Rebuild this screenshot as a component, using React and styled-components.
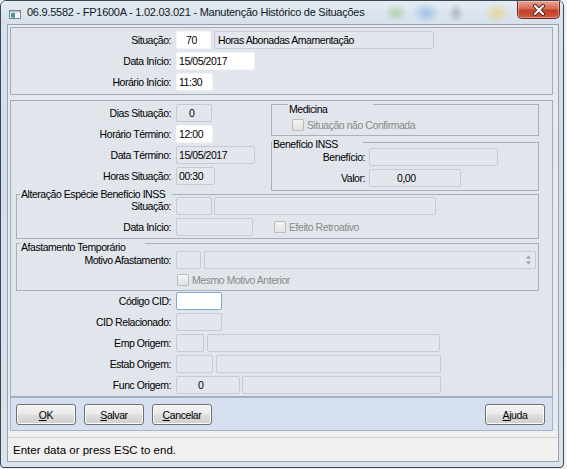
import React from "react";
import styled, { createGlobalStyle } from "styled-components";

const UI_FONT = `"Liberation Sans", Arial, sans-serif`;

const GlobalStyle = createGlobalStyle`
  *, *::before, *::after { box-sizing: border-box; }
  html, body { margin: 0; padding: 0; }
  body {
    background: #eef0f2;
    font-family: ${UI_FONT};
    font-size: 10.5px;
    letter-spacing: -0.45px;
    color: #000;
  }
`;

/* ---------- window chrome ---------- */

const Window = styled.div`
  width: 564px;
  height: 468px;
  border: 1px solid #3c4654;
  border-radius: 6px 6px 4px 4px;
  background: linear-gradient(180deg, #d9e3ee 0%, #d3dde9 30%, #dae2eb 100%);
  display: flex;
  flex-direction: column;
  overflow: hidden;
`;

const TitleBar = styled.div`
  height: 23px;
  flex: none;
  display: flex;
  align-items: flex-start;
  padding-left: 8px;
  background:
    radial-gradient(ellipse 12px 9px at 395px 12px, rgba(120, 190, 90, 0.45), transparent),
    radial-gradient(ellipse 14px 10px at 425px 12px, rgba(90, 150, 220, 0.45), transparent),
    radial-gradient(ellipse 8px 10px at 455px 12px, rgba(90, 100, 110, 0.35), transparent),
    radial-gradient(ellipse 13px 10px at 496px 12px, rgba(235, 200, 90, 0.55), transparent),
    linear-gradient(180deg, #e3eaf2 0%, #d6e0eb 100%);
`;

const AppIcon = styled.svg`
  flex: none;
  margin-top: 9px;
  width: 12px;
  height: 9px;
`;

const Title = styled.span`
  margin-left: 6px;
  line-height: 23px;
  font-size: 11px;
  letter-spacing: -0.25px;
  color: #101820;
  white-space: nowrap;
`;

const CloseButton = styled.div`
  margin-left: auto;
  margin-right: 3px;
  width: 43px;
  height: 18px;
  flex: none;
  border: 1px solid #6c2a22;
  border-top: none;
  border-radius: 0 0 5px 5px;
  background: linear-gradient(180deg, #e9a797 0%, #d46a54 45%, #c2402b 55%, #d3573f 100%);
  box-shadow: inset 0 0 0 1px rgba(255, 220, 210, 0.45);
  display: flex;
  align-items: center;
  justify-content: center;
`;

const Client = styled.div`
  flex: 1;
  margin: 0 4px 5px 6px;
  border: 1px solid #97a2b2;
  background: #f0f0f0;
  display: flex;
  flex-direction: column;
`;

const FormArea = styled.div`
  background: #e6e9ef;
  padding: 2px 5px 0 2px;
`;

/* ---------- panels, groups, rows ---------- */

const Panel = styled.div`
  height: ${(p) => p.$h}px;
  margin-top: ${(p) => p.$mt || 0}px;
  border: 1px solid #a3abb7;
  background: #e1e5ec;
  padding: ${(p) => p.$pad};
`;

const TopSection = styled.div`
  display: flex;
  height: 87px;
`;

const Column = styled.div`
  width: ${(p) => p.$w}px;
  flex: none;
  display: flex;
  flex-direction: column;
  gap: ${(p) => p.$gap || 0}px;
`;

const Group = styled.div`
  position: relative;
  width: ${(p) => p.$w}px;
  height: ${(p) => p.$h}px;
  margin-top: ${(p) => p.$mt || 0}px;
  margin-left: ${(p) => p.$ml || 0}px;
  border: 1px solid #a8b0bb;
  padding: ${(p) => p.$pad};
  display: flex;
  flex-direction: column;
  gap: ${(p) => p.$gap || 0}px;
`;

/* the caption sits over the top edge of its group box */
const Legend = styled.span`
  position: absolute;
  left: ${(p) => p.$x}px;
  top: ${(p) => p.$y}px;
  width: ${(p) => p.$w}px;
  height: 13px;
  line-height: 13px;
  padding-left: 1px;
  background: #e1e5ec;
  white-space: nowrap;
`;

const Rows = styled.div`
  display: flex;
  flex-direction: column;
  gap: 3px;
  margin-top: ${(p) => p.$mt || 0}px;
`;

const Row = styled.div`
  display: flex;
  align-items: center;
  height: ${(p) => p.$h || 18}px;
  flex: none;
`;

const Label = styled.span`
  width: ${(p) => p.$w}px;
  flex: none;
  text-align: right;
  padding-right: ${(p) => p.$gap ?? 5}px;
  white-space: nowrap;
`;

const Field = styled.div`
  width: ${(p) => p.$w}px;
  height: 18px;
  flex: none;
  margin-left: ${(p) => p.$ml || 0}px;
  border: 1px solid
    ${(p) => (p.$focus ? "#7ea9d9" : p.$edit ? "#f3f5f8" : "#c6cbd3")};
  border-radius: 2px;
  background: ${(p) => (p.$edit ? "#ffffff" : "#e3e6ec")};
  padding-left: ${(p) => p.$pad ?? 2}px;
  display: flex;
  align-items: center;
  white-space: nowrap;
  overflow: hidden;
`;

const FieldText = styled.span`
  flex: 1;
`;

const Spinner = styled.div`
  width: 14px;
  height: 100%;
  flex: none;
  border-left: 1px solid #eef0f4;
  display: flex;
  align-items: center;
  justify-content: center;
`;

const Check = styled.div`
  display: flex;
  align-items: center;
  gap: 3px;
  height: 13px;
  margin-left: ${(p) => p.$ml || 0}px;
  color: #8a8a8a;
  white-space: nowrap;
`;

const Box = styled.span`
  width: 12px;
  height: 12px;
  flex: none;
  border: 1px solid #bcbcbc;
  border-radius: 1px;
  background: linear-gradient(180deg, #f3f3f3, #e2e2e2);
`;

/* ---------- buttons and status ---------- */

const ButtonBar = styled.div`
  height: 34px;
  border: 1px solid #a7b2c3;
  background: #d5dfef;
  padding: 6px 7px 0 5px;
  display: flex;
  gap: 8px;
`;

const Button = styled.button`
  width: 60px;
  height: 21px;
  margin: 0;
  margin-left: ${(p) => (p.$push ? "auto" : "0")};
  padding: 0;
  border: 1px solid #707070;
  border-radius: 3px;
  background: linear-gradient(180deg, #f3f3f3 0%, #ebebeb 48%, #dddddd 52%, #cfcfcf 100%);
  box-shadow: inset 0 0 0 1px #fbfbfb;
  font-family: ${UI_FONT};
  font-size: 10.5px;
  letter-spacing: -0.4px;
  color: #000;

  u {
    text-decoration: underline;
  }
`;

const StatusArea = styled.div`
  flex: 1;
  padding-top: 6px;
  display: flex;
  flex-direction: column;
`;

const StatusBar = styled.div`
  flex: 1;
  border-top: 1px solid #d3d3d3;
  padding-left: 5px;
  display: flex;
  align-items: center;
  font-size: 11.5px;
  letter-spacing: 0;
  color: #000;
`;

/* ---------- small drawings ---------- */

const WindowGlyph = () => (
  <AppIcon viewBox="0 0 12 9">
    <rect x="0.5" y="0.5" width="11" height="8" fill="#f4f6f8" stroke="#7b8590" />
    <rect x="1" y="1" width="10" height="1.5" fill="#b9c3cd" />
    <rect x="2" y="3" width="4" height="4.5" fill="#3c9a74" />
    <rect x="4" y="3" width="2" height="4.5" fill="#3f8fc4" />
  </AppIcon>
);

const CloseGlyph = () => (
  <svg width="14" height="12" viewBox="0 0 14 12">
    <path d="M3 2 L11 10 M11 2 L3 10" stroke="#5a2018" strokeWidth="4" strokeLinecap="round" />
    <path d="M3 2 L11 10 M11 2 L3 10" stroke="#ffffff" strokeWidth="2.2" strokeLinecap="round" />
  </svg>
);

const SpinArrows = () => (
  <svg width="7" height="12" viewBox="0 0 7 12">
    <path d="M3.5 1.5 L6 4.5 H1 Z" fill="#9aa0a8" />
    <path d="M3.5 10.5 L6 7.5 H1 Z" fill="#9aa0a8" />
  </svg>
);

export default function App() {
  return (
    <>
      <GlobalStyle />
      <Window>
        <TitleBar>
          <WindowGlyph />
          <Title>06.9.5582 - FP1600A - 1.02.03.021 - Manutenção Histórico de Situações</Title>
          <CloseButton>
            <CloseGlyph />
          </CloseButton>
        </TitleBar>

        <Client>
          <FormArea>
            <Panel $h={68} $pad="3px 0 0 0">
              <Rows>
                <Row>
                  <Label $w={165}>Situação:</Label>
                  <Field $w={35} $edit $pad={9}>70</Field>
                  <Field $w={220} $ml={3} $pad={3}>Horas Abonadas Amamentação</Field>
                </Row>
                <Row>
                  <Label $w={165}>Data Início:</Label>
                  <Field $w={79} $edit>15/05/2017</Field>
                </Row>
                <Row>
                  <Label $w={165}>Horário Início:</Label>
                  <Field $w={37} $edit>11:30</Field>
                </Row>
              </Rows>
            </Panel>

            <Panel $h={297} $mt={5} $pad="3px 0 0 0">
              <TopSection>
                <Column $w={260}>
                  <Rows>
                    <Row>
                      <Label $w={165}>Dias Situação:</Label>
                      <Field $w={36} $pad={12}>0</Field>
                    </Row>
                    <Row>
                      <Label $w={165}>Horário Término:</Label>
                      <Field $w={37} $edit>12:00</Field>
                    </Row>
                    <Row>
                      <Label $w={165}>Data Término:</Label>
                      <Field $w={79}>15/05/2017</Field>
                    </Row>
                    <Row>
                      <Label $w={165}>Horas Situação:</Label>
                      <Field $w={39}>00:30</Field>
                    </Row>
                  </Rows>
                </Column>
                <Column $w={268} $gap={6}>
                  <Group $w={268} $h={32} $pad="13px 0 0 20px">
                    <Legend $x={16} $y={-2} $w={85}>Medicina</Legend>
                    <Check>
                      <Box />
                      Situação não Confirmada
                    </Check>
                  </Group>
                  <Group $w={268} $h={49} $pad="5px 0 0 0">
                    <Legend $x={0} $y={-5} $w={91}>Benefício INSS</Legend>
                    <Rows>
                      <Row>
                        <Label $w={97} $gap={4}>Benefício:</Label>
                        <Field $w={129} />
                      </Row>
                      <Row>
                        <Label $w={97} $gap={4}>Valor:</Label>
                        <Field $w={92} $pad={27}>0,00</Field>
                      </Row>
                    </Rows>
                  </Group>
                </Column>
              </TopSection>

              <Group $w={523} $h={45} $mt={3} $ml={5} $pad="2px 0 0 0">
                <Legend $x={3} $y={-7} $w={152}>Alteração Espécie Benefício INSS</Legend>
                <Rows>
                  <Row>
                    <Label $w={159}>Situação:</Label>
                    <Field $w={36} />
                    <Field $w={222} $ml={2} />
                  </Row>
                  <Row>
                    <Label $w={159}>Data Início:</Label>
                    <Field $w={77} />
                    <Check $ml={21}>
                      <Box />
                      Efeito Retroativo
                    </Check>
                  </Row>
                </Rows>
              </Group>

              <Group $w={523} $h={48} $mt={4} $ml={5} $pad="7px 0 0 0" $gap={4}>
                <Legend $x={3} $y={-3} $w={125}>Afastamento Temporário</Legend>
                <Row>
                  <Label $w={159}>Motivo Afastamento:</Label>
                  <Field $w={25} />
                  <Field $w={332} $ml={3} $pad={0}>
                    <FieldText />
                    <Spinner>
                      <SpinArrows />
                    </Spinner>
                  </Field>
                </Row>
                <Row $h={13}>
                  <Label $w={159} />
                  <Check $ml={1}>
                    <Box />
                    Mesmo Motivo Anterior
                  </Check>
                </Row>
              </Group>

              <Rows $mt={1}>
                <Row>
                  <Label $w={165}>Código CID:</Label>
                  <Field $w={46} $edit $focus />
                </Row>
                <Row>
                  <Label $w={165}>CID Relacionado:</Label>
                  <Field $w={46} />
                </Row>
                <Row>
                  <Label $w={165}>Emp Origem:</Label>
                  <Field $w={28} />
                  <Field $w={233} $ml={3} />
                </Row>
                <Row>
                  <Label $w={165}>Estab Origem:</Label>
                  <Field $w={37} />
                  <Field $w={225} $ml={3} />
                </Row>
                <Row>
                  <Label $w={165}>Func Origem:</Label>
                  <Field $w={64} $pad={21}>0</Field>
                  <Field $w={199} $ml={2} />
                </Row>
              </Rows>
            </Panel>

            <ButtonBar>
              <Button><u>O</u>K</Button>
              <Button><u>S</u>alvar</Button>
              <Button><u>C</u>ancelar</Button>
              <Button $push><u>A</u>juda</Button>
            </ButtonBar>
          </FormArea>

          <StatusArea>
            <StatusBar>Enter data or press ESC to end.</StatusBar>
          </StatusArea>
        </Client>
      </Window>
    </>
  );
}
